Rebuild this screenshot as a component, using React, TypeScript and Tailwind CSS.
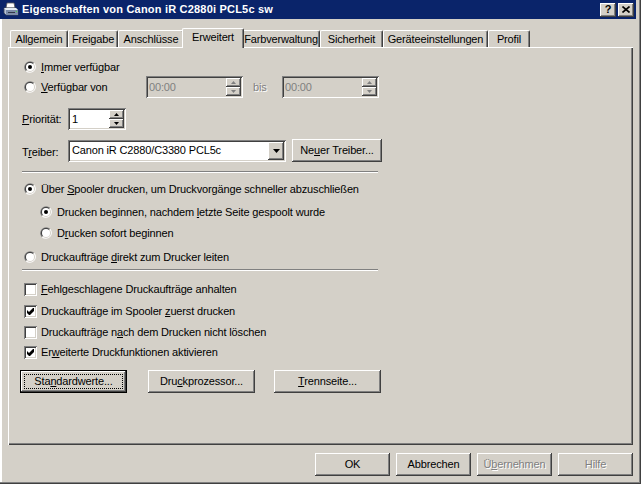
import React from 'react';

const raised =
  'bg-[#d4d0c8] shadow-[inset_-1px_-1px_#404040,inset_1px_1px_#ffffff,inset_-2px_-2px_#808080,inset_2px_2px_#d4d0c8]';
const sunken =
  'shadow-[inset_1px_1px_#808080,inset_-1px_-1px_#ffffff,inset_2px_2px_#404040,inset_-2px_-2px_#d4d0c8]';

function Radio({ checked }: { checked?: boolean }) {
  return (
    <svg width="12" height="12" viewBox="0 0 12 12" className="shrink-0">
      <path d="M1.76 10.24A6 6 0 0 1 10.24 1.76Z" fill="#808080" />
      <path d="M1.76 10.24A6 6 0 0 0 10.24 1.76Z" fill="#ffffff" />
      <path d="M2.46 9.54A5 5 0 0 1 9.54 2.46Z" fill="#404040" />
      <path d="M2.46 9.54A5 5 0 0 0 9.54 2.46Z" fill="#d4d0c8" />
      <circle cx="6" cy="6" r="4" fill="#ffffff" />
      {checked && <circle cx="6" cy="6" r="2" fill="#000000" />}
    </svg>
  );
}

function Check({ checked }: { checked?: boolean }) {
  return (
    <div className={`w-[13px] h-[13px] shrink-0 bg-white flex items-center justify-center ${sunken}`}>
      {checked && (
        <svg width="7" height="7" viewBox="0 0 7 7">
          <polygon points="0,2 2,4 6,0 7,0 7,3 3,7 2,7 0,5" fill="#000000" />
        </svg>
      )}
    </div>
  );
}

function Arrow({ up, disabled }: { up?: boolean; disabled?: boolean }) {
  return (
    <svg width="5" height="3" viewBox="0 0 5 3">
      <polygon points={up ? '2.5,0 5,3 0,3' : '0,0 5,0 2.5,3'} fill={disabled ? '#808080' : '#000000'} />
    </svg>
  );
}

function Spin({ disabled }: { disabled?: boolean }) {
  return (
    <div className="flex flex-col w-[15px] h-[18px] shrink-0">
      <div className={`h-[9px] flex items-center justify-center ${raised}`}>
        <Arrow up disabled={disabled} />
      </div>
      <div className={`h-[9px] flex items-center justify-center ${raised}`}>
        <Arrow disabled={disabled} />
      </div>
    </div>
  );
}

function Btn({
  children,
  w,
  disabled,
  focused,
}: {
  children: React.ReactNode;
  w: string;
  disabled?: boolean;
  focused?: boolean;
}) {
  if (focused) {
    return (
      <div className={`${w} h-[23px] border border-black shrink-0`}>
        <div className={`h-full flex items-center justify-center p-[3px] ${raised}`}>
          <div className="w-full h-full flex items-center justify-center border border-dotted border-black">
            {children}
          </div>
        </div>
      </div>
    );
  }
  return (
    <div
      className={`${w} h-[23px] shrink-0 flex items-center justify-center ${raised} ${
        disabled ? 'text-[#808080] [text-shadow:1px_1px_0_#ffffff]' : ''
      }`}
    >
      {children}
    </div>
  );
}

function Tab({ label, w, active }: { label: string; w: string; active?: boolean }) {
  if (active) {
    return (
      <div
        className={`${w} relative z-10 h-[20px] -mb-[1px] -mx-[2px] px-[2px] bg-[#d4d0c8] border-t border-l border-white rounded-tl-[2px] rounded-tr-[2px] border-r border-r-[#404040] shadow-[inset_-1px_0_#808080] flex justify-center pt-[2px]`}
      >
        {label}
      </div>
    );
  }
  return (
    <div
      className={`${w} h-[17px] bg-[#d4d0c8] border-t border-l border-white rounded-tl-[2px] rounded-tr-[2px] border-r border-r-[#404040] shadow-[inset_-1px_0_#808080] flex justify-center pt-[2px]`}
    >
      {label}
    </div>
  );
}

function Printer() {
  return (
    <svg width="16" height="16" viewBox="0 0 16 16">
      <polygon points="4,1 11,1 12,6 3,6" fill="#ffffff" stroke="#5a5a5a" strokeWidth="0.8" />
      <polygon points="1,6 13,6 15,8 15,13 3,13 1,11" fill="#b8c4d8" stroke="#404858" strokeWidth="0.8" />
      <polygon points="1,6 13,6 15,8 3,8" fill="#e4ecf4" />
      <rect x="3" y="8" width="12" height="5" fill="#7c8ca8" />
      <rect x="5" y="10" width="7" height="1" fill="#303848" />
      <rect x="13" y="9" width="1" height="1" fill="#40e040" />
    </svg>
  );
}

export default function App() {
  return (
    <div className="w-[641px] h-[484px] flex flex-col bg-[#d4d0c8] text-[11px] leading-[13px] tracking-[-0.15px] text-black font-['Liberation_Sans',Arial,sans-serif] shadow-[inset_-1px_-1px_#404040,inset_-2px_-2px_#808080,inset_2px_0_#ffffff] overflow-hidden select-none">
      {/* Titelleiste */}
      <div className="h-[19px] mr-[5px] bg-[#0a246a] flex items-center pl-[3px] pr-[2px] shrink-0">
        <Printer />
        <span className="ml-[3px] text-white font-bold text-[11px] tracking-[0.2px]">
          Eigenschaften von Canon iR C2880i PCL5c sw
        </span>
        <div className="ml-auto flex gap-[2px]">
          <div className={`w-[16px] h-[14px] flex items-center justify-center font-bold text-[11px] ${raised}`}>?</div>
          <div className={`w-[16px] h-[14px] flex items-center justify-center ${raised}`}>
            <svg width="8" height="7" viewBox="0 0 8 7">
              <path d="M0.5 0.5L7.5 6.5M7.5 0.5L0.5 6.5" stroke="#000" strokeWidth="1.6" />
            </svg>
          </div>
        </div>
      </div>

      {/* Reiter */}
      <div className="mt-[9px] pl-[10px] h-[19px] flex items-end shrink-0">
        <Tab label="Allgemein" w="w-[58px]" />
        <Tab label="Freigabe" w="w-[50px]" />
        <Tab label="Anschlüsse" w="w-[66px]" />
        <Tab label="Erweitert" w="w-[62px]" active />
        <Tab label="Farbverwaltung" w="w-[78px]" />
        <Tab label="Sicherheit" w="w-[63px]" />
        <Tab label="Geräteeinstellungen" w="w-[105px]" />
        <Tab label="Profil" w="w-[42px]" />
      </div>

      {/* Seite */}
      <div className="ml-[8px] w-[625px] h-[398px] shrink-0 shadow-[inset_1px_1px_#ffffff,inset_-1px_-1px_#404040,inset_-2px_-2px_#808080] pl-[14px] flex flex-col">
        <div className="mt-[12px] h-[16px] ml-[2px] flex items-center gap-[5px]">
          <Radio checked />
          <span>
            <u>I</u>mmer verfügbar
          </span>
        </div>

        <div className="mt-[1px] h-[22px] flex items-center">
          <div className="w-[122px] ml-[2px] flex items-center gap-[5px]">
            <Radio />
            <span>
              <u>V</u>erfügbar von
            </span>
          </div>
          <div className={`w-[97px] h-[22px] bg-[#d4d0c8] flex items-center pl-[3px] pr-[2px] ${sunken}`}>
            <span className="flex-1 text-[#808080]">00:00</span>
            <Spin disabled />
          </div>
          <span className="ml-[10px] w-[29px] text-[#808080] [text-shadow:1px_1px_0_#ffffff]">bis</span>
          <div className={`w-[97px] h-[22px] bg-[#d4d0c8] flex items-center pl-[3px] pr-[2px] ${sunken}`}>
            <span className="flex-1 text-[#808080]">00:00</span>
            <Spin disabled />
          </div>
        </div>

        <div className="mt-[10px] h-[22px] flex items-center">
          <span className="w-[46px]">
            <u>P</u>riorität:
          </span>
          <div className={`w-[58px] h-[22px] bg-white flex items-center pl-[4px] pr-[2px] ${sunken}`}>
            <span className="flex-1">1</span>
            <Spin />
          </div>
        </div>

        <div className="mt-[9px] h-[23px] flex items-center">
          <span className="w-[46px] pt-[3px]">
            T<u>r</u>eiber:
          </span>
          <div className={`w-[218px] h-[22px] bg-white flex items-center pl-[4px] pr-[2px] ${sunken}`}>
            <span className="flex-1">Canon iR C2880/C3380 PCL5c</span>
            <div className={`w-[16px] h-[18px] flex items-center justify-center ${raised}`}>
              <svg width="7" height="4" viewBox="0 0 7 4">
                <polygon points="0,0 7,0 3.5,4" fill="#000" />
              </svg>
            </div>
          </div>
          <div className="ml-[6px]">
            <Btn w="w-[90px]">
              <span>
                Ne<u>u</u>er Treiber...
              </span>
            </Btn>
          </div>
        </div>

        <div className="mt-[9px] w-[356px] h-[2px] border-t border-t-[#808080] border-b border-b-white" />

        <div className="mt-[8px] h-[16px] ml-[2px] flex items-center gap-[5px]">
          <Radio checked />
          <span>
            Über <u>S</u>pooler drucken, um Druckvorgänge schneller abzuschließen
          </span>
        </div>
        <div className="mt-[7px] h-[16px] ml-[18px] flex items-center gap-[5px]">
          <Radio checked />
          <span>
            Drucken beginnen, nachdem <u>l</u>etzte Seite gespoolt wurde
          </span>
        </div>
        <div className="mt-[5px] h-[16px] ml-[18px] flex items-center gap-[5px]">
          <Radio />
          <span>
            D<u>r</u>ucken sofort beginnen
          </span>
        </div>
        <div className="mt-[8px] h-[16px] ml-[2px] flex items-center gap-[5px]">
          <Radio />
          <span>
            Druckaufträge <u>d</u>irekt zum Drucker leiten
          </span>
        </div>

        <div className="mt-[4px] w-[356px] h-[2px] border-t border-t-[#808080] border-b border-b-white" />

        <div className="mt-[10px] h-[16px] ml-[2px] flex items-center gap-[4px]">
          <Check />
          <span>
            <u>F</u>ehlgeschlagene Druckaufträge anhalten
          </span>
        </div>
        <div className="mt-[6px] h-[16px] ml-[2px] flex items-center gap-[4px]">
          <Check checked />
          <span>
            Druckaufträge im Spooler <u>z</u>uerst drucken
          </span>
        </div>
        <div className="mt-[5px] h-[16px] ml-[2px] flex items-center gap-[4px]">
          <Check />
          <span>
            Druckaufträge n<u>a</u>ch dem Drucken nicht löschen
          </span>
        </div>
        <div className="mt-[4px] h-[16px] ml-[2px] flex items-center gap-[4px]">
          <Check checked />
          <span>
            Er<u>w</u>eiterte Druckfunktionen aktivieren
          </span>
        </div>

        <div className="mt-[10px] -ml-[2px] flex">
          <Btn w="w-[107px]" focused>
            <span>
              Sta<u>n</u>dardwerte...
            </span>
          </Btn>
          <div className="ml-[21px]">
            <Btn w="w-[107px]">
              <span>
                Dru<u>c</u>kprozessor...
              </span>
            </Btn>
          </div>
          <div className="ml-[19px]">
            <Btn w="w-[107px]">
              <span>
                <u>T</u>rennseite...
              </span>
            </Btn>
          </div>
        </div>
      </div>

      {/* Schaltflächen */}
      <div className="mt-[8px] w-[633px] flex justify-end gap-[6px] shrink-0">
        <Btn w="w-[75px]">OK</Btn>
        <Btn w="w-[75px]">Abbrechen</Btn>
        <Btn w="w-[75px]" disabled>
          <span>
            Ü<u>b</u>ernehmen
          </span>
        </Btn>
        <Btn w="w-[75px]" disabled>
          Hilfe
        </Btn>
      </div>
    </div>
  );
}
